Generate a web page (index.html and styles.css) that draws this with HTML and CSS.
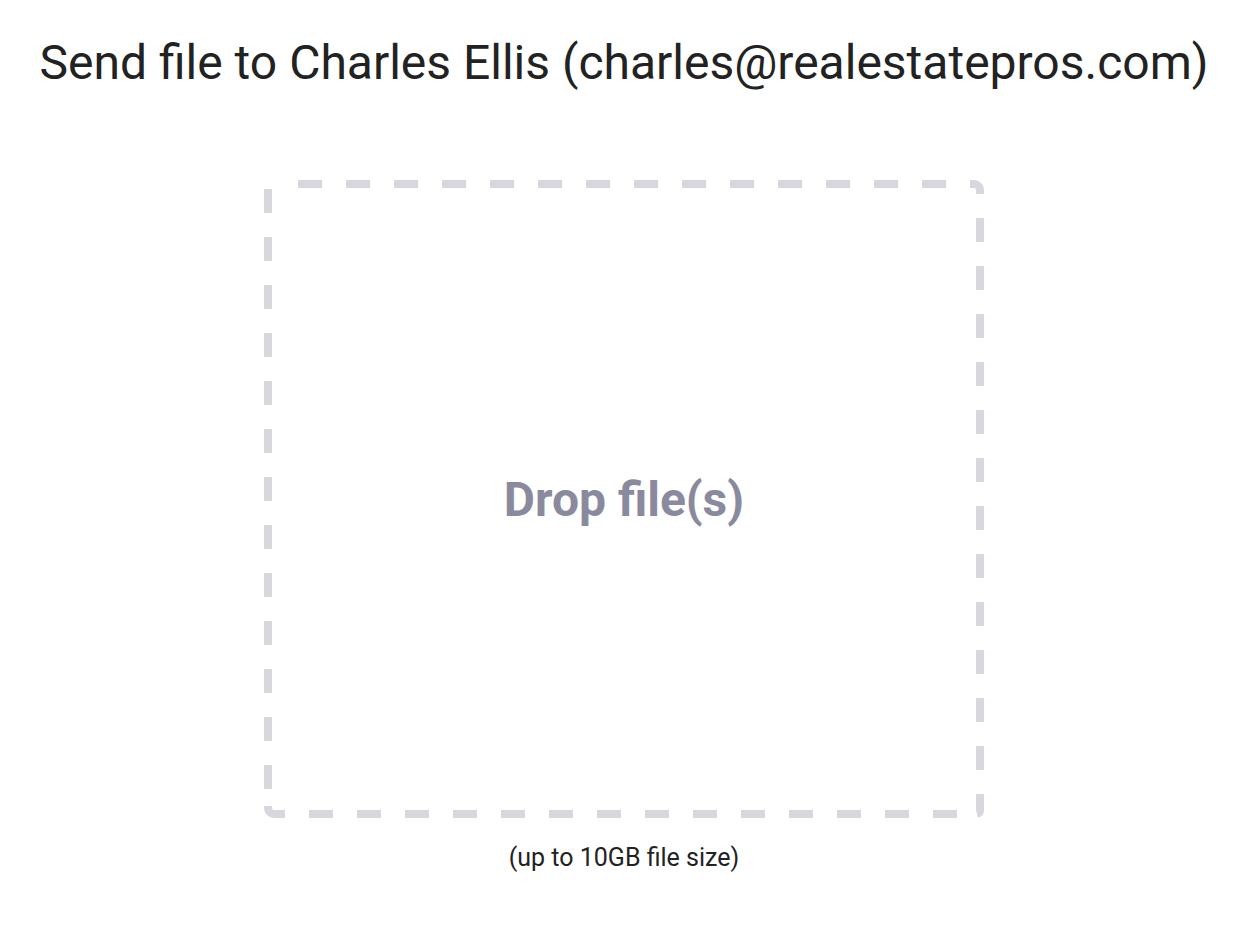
FILE: index.html
```html
<!DOCTYPE html>
<html>
<head>
<meta charset="utf-8">
<link rel="stylesheet" href="styles.css">
</head>
<body>
<div class="page">
  <h1 class="title">Send file to Charles Ellis (charles@realestatepros.com)</h1>
  <div class="drop">
    <svg class="drop-border" width="720" height="638" viewBox="0 0 720 638" aria-hidden="true">
      <g fill="none" stroke="#d7d7dd" stroke-width="8" stroke-dasharray="24 24">
        <line x1="34" y1="4" x2="682" y2="4"/>
        <line x1="716" y1="38" x2="716" y2="590"/>
        <line x1="45" y1="634" x2="693" y2="634"/>
        <line x1="4" y1="9" x2="4" y2="609"/>
      </g>
      <g fill="none" stroke="#d7d7dd" stroke-width="8">
        <path d="M706 4 H710 A6 6 0 0 1 716 10 V14"/>
        <path d="M716 614 V630 A4 4 0 0 1 713 634"/>
        <path d="M21 634 H10 A6 6 0 0 1 4 628 V626"/>
      </g>
    </svg>
    <span class="drop-label">Drop file(s)</span>
  </div>
  <p class="note">(up to 10GB file size)</p>
</div>
</body>
</html>
```
FILE: styles.css
```css
html, body {
  margin: 0;
  padding: 0;
  background: #fff;
}
.page {
  width: 1248px;
  display: flex;
  flex-direction: column;
  align-items: center;
  font-family: Roboto, "Liberation Sans", sans-serif;
  color: #222;
}
.title {
  margin: 35px 0 0;
  font-size: 48px;
  font-weight: 400;
  line-height: 56px;
  color: #222;
  white-space: nowrap;
}
.drop {
  position: relative;
  margin-top: 89px;
  width: 720px;
  height: 638px;
  display: flex;
  align-items: center;
  justify-content: center;
}
.drop-border {
  position: absolute;
  left: 0;
  top: 0;
}
.drop-label {
  position: relative;
  font-size: 48px;
  font-weight: 700;
  color: #8a8a9e;
}
.note {
  margin: 26px 0 0;
  font-size: 25px;
  line-height: 28px;
  color: #222;
}
```
